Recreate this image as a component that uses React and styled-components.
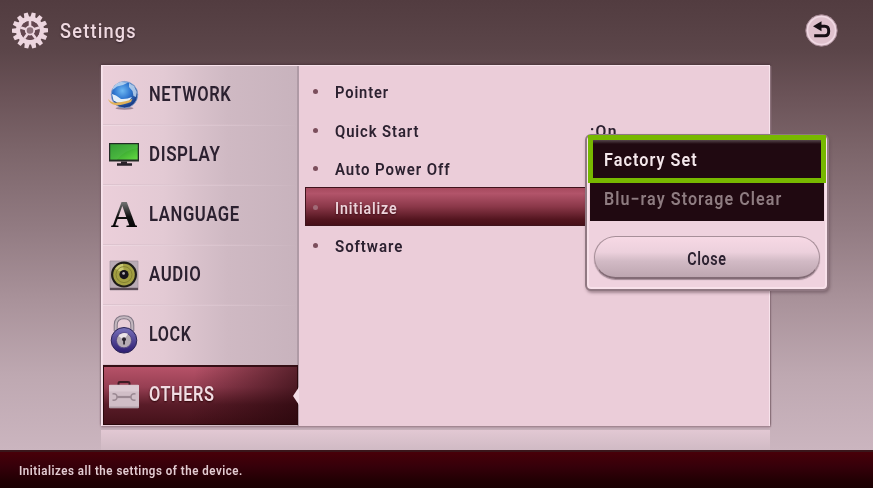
import React, { useState } from 'react';
import styled, { createGlobalStyle, css } from 'styled-components';

const theme = {
  font: 'Roboto, "Liberation Sans", sans-serif',
  ink: '#2c2130',
  panel: '#ebcdd9',
  light: '#f3dde6',
  highlight: '#77b800',
};

const GlobalStyle = createGlobalStyle`
  body {
    margin: 0;
    overflow: hidden;
  }
  * {
    box-sizing: border-box;
  }
`;

const Screen = styled.div`
  display: flex;
  flex-direction: column;
  width: 873px;
  height: 488px;
  font-family: ${theme.font};
  background: linear-gradient(#523c40 0, #5b4549 50px, #6b5358 95px, #7c656a 150px, #917a81 225px, #a9929a 300px, #bea8b1 375px, #cbb5bf 450px);
`;

// condensed lettering, squeezed from its left edge
const Label = styled.span`
  display: inline-block;
  white-space: nowrap;
  font-size: ${({ $size }) => $size}px;
  line-height: 1;
  font-weight: ${({ $weight }) => $weight || 600};
  letter-spacing: ${({ $gap }) => $gap || 0}px;
  transform: scaleX(${({ $squeeze }) => $squeeze || 0.8});
  transform-origin: ${({ $origin }) => $origin || 'left'} center;
`;

const Header = styled.header`
  display: flex;
  align-items: center;
  height: 65px;
  padding: 0 35px 5px 11px;
  color: #efd9e0;
  text-shadow: 0 1px 2px #33222a;
`;

const Title = styled.h1`
  flex: 1;
  display: flex;
  margin: 2px 0 0 11px;
`;

const BackButton = styled.button`
  display: flex;
  width: 33px;
  height: 33px;
  padding: 0;
  border: 0;
  background: none;
`;

const Panel = styled.main`
  display: flex;
  position: relative;
  flex: none;
  width: 669px;
  height: 361px;
  margin-left: 101px;
  background: ${theme.panel};
  border: solid #f8e3ec;
  border-width: 1px 1px 0 1px;
  box-shadow: 0 -1px 2px #4b353c, 1px 1px 1px #a98e99, 0 2px 2px #b299a4;
`;

const Sidebar = styled.nav`
  width: 197px;
  border-left: 1px solid #f4dfe8;
  border-right: 2px solid #af9aa5;
  background: linear-gradient(90deg, #ebcfda 0, #e3cad4 60px, #cfb9c3 125px, #c8b3bd 100%);
`;

const MenuItem = styled.div`
  display: flex;
  align-items: center;
  position: relative;
  height: 60px;
  padding: 0 0 3px 5px;
  color: ${theme.ink};
  background: linear-gradient(90deg, #dcc3ce, #cbb5bf00 85%) bottom 1px left / 100% 1px no-repeat,
    linear-gradient(90deg, #f0dae3, #d0bbc5 85%, transparent) bottom / 100% 1px no-repeat;

  ${({ $active }) => $active && css`
    width: 195px;
    margin-top: -1px;
    padding: 0 0 2px 4px;
    color: #f2dce3;
    text-shadow: 0 1px 2px #2c0508;
    border: 1px solid #2b080c;
    border-top: 2px solid #350f15;
    background: linear-gradient(100deg, transparent 45%, #25050ab0 100%),
      linear-gradient(#b65268, #973f53 35%, #591c28 66%, #45111a);

    &::after {
      content: '';
      position: absolute;
      top: 20px;
      right: -2px;
      border: solid transparent;
      border-width: 9px 6px 9px 0;
      border-right-color: ${theme.light};
    }
  `}
`;

const MenuIcon = styled.span`
  display: flex;
  justify-content: center;
  width: 32px;
  margin-right: 9px;
`;

const Letter = styled.span`
  font: bold 37px/34px "Liberation Serif", serif;
  background: linear-gradient(#777 10%, #111 55%, #000);
  background-clip: text;
  color: transparent;
`;

const Options = styled.section`
  flex: 1;
  padding: 5.5px 0 0 6px;
`;

const Option = styled.div`
  display: grid;
  grid-template-columns: 30px 255px 1fr;
  align-items: center;
  height: 38.5px;
  padding-top: 5.5px;
  color: ${theme.ink};

  ${({ $active }) => $active && css`
    color: #ecd3da;
    text-shadow: 0 1px 2px #3b0b14;
    border: 1px solid #3f131c;
    border-right: 0;
    grid-template-columns: 29px 255px 1fr;
    background: linear-gradient(#a64a5e, #b2546a 15%, #8b3849 50%, #53151f 85%, #470f18);
  `}
`;

const Bullet = styled.i`
  width: 5px;
  height: 5px;
  margin: -4px 0 0 ${({ $active }) => ($active ? 7 : 8)}px;
  border-radius: 50%;
  background: ${({ $active }) => ($active ? '#a06a77' : '#7b4e5c')};
`;

const Reflection = styled.div`
  width: 669px;
  height: 20px;
  margin: 4px 0 0 101px;
  background: linear-gradient(#e2c8d3, #d0bac4);
`;

const Footer = styled.footer`
  display: flex;
  align-items: center;
  height: 38px;
  margin-top: auto;
  padding: 1px 0 0 19px;
  color: #e3ccd2;
  border-top: 2px solid #3a161b;
  background: linear-gradient(#480009, #36000a 40%, #210003 80%, #1b0002);
`;

const Popup = styled.aside`
  position: absolute;
  top: 68px;
  left: 483px;
  width: 244px;
  height: 157px;
  padding: 5px 4px 0 5px;
  border: 2px solid #907882;
  border-radius: 6px;
  background: #efd2de;
  box-shadow: inset 0 0 0 2px #f8e1ea, 1px 2px 3px #5d465080;
`;

const Choice = styled.div`
  display: flex;
  align-items: center;
  height: 38px;
  padding: 0 0 5px 14px;
  margin: 0 -1px 0 -2px;
  color: #8e7c81;
  background: #200911;

  ${({ $selected }) => $selected && css`
    height: 48px;
    margin: -6px -3px 0 -4px;
    padding: 2px 0 0 11px;
    color: #f4e7eb;
    border: 5px solid ${theme.highlight};
    background: linear-gradient(#55454b, #200911 4px);
  `}
`;

const CloseButton = styled.button`
  display: flex;
  align-items: center;
  justify-content: center;
  width: 226px;
  height: 43px;
  margin: 15px 0 0 2px;
  padding: 6px 0 0;
  border: 1px solid #a78f99;
  border-bottom: 2px solid #826b75;
  border-radius: 22px;
  color: ${theme.ink};
  font-family: inherit;
  background: linear-gradient(#f7d9e5, #ecd0dc 38%, #d2bac5 60%, #bda6b0);
  box-shadow: 0 1px 1px #a28a95;
`;

const GearIcon = () => (
  <svg width="38" height="38" viewBox="-19 -19.5 38 38">
    <g fill="#edd6df">
      {[...Array(14)].map((_, i) => (
        <path key={i} d="M-2.6-12L-2-18H2L2.6-12Z" transform={`rotate(${i * 360 / 14 + 12})`} />
      ))}
    </g>
    <circle r="11.8" fill="none" stroke="#edd6df" strokeWidth="4.4" />
    <circle r="9.6" fill="#64474f" />
    {[0, 72, 144, 216, 288].map((a) => (
      <path key={a} d="M0-3V-10" stroke="#edd6df" strokeWidth="2.6" transform={`rotate(${a})`} />
    ))}
    <circle r="4.2" fill="#8b6f78" stroke="#edd6df" strokeWidth="1.8" />
  </svg>
);

const BackIcon = () => (
  <svg width="33" height="33" viewBox="0 0 33 33">
    <circle cx="16.5" cy="16.5" r="15.7" fill="#dcbfcb" stroke="#a58994" />
    <circle cx="16.5" cy="16.5" r="14" fill="#dfc1cd" stroke="#f0d9e3" strokeWidth="1.5" />
    <path d="M14 12.2H19.8Q23.7 12.2 23.7 17T19.8 21.8H9.2" fill="none" stroke="#170f15" strokeWidth="3" />
    <path d="M8 12.2L16.5 7.2V17.2Z" fill="#170f15" />
  </svg>
);

const GlobeIcon = () => (
  <svg width="32" height="32" viewBox="0 0 32 32">
    <defs>
      <radialGradient id="globe" cx=".42" cy=".35" r=".7">
        <stop offset="0" stopColor="#6db8f2" />
        <stop offset=".45" stopColor="#2f76cf" />
        <stop offset="1" stopColor="#152c72" />
      </radialGradient>
    </defs>
    <ellipse cx="16.5" cy="29.3" rx="9" ry="1.4" fill="#9b8394" />
    <circle cx="16.5" cy="15.7" r="13.3" fill="url(#globe)" stroke="#8aa6cf" strokeWidth=".8" />
    <path d="M5 9Q8 4 13 3L20 3.4 15 6 9 7.5 4.5 11ZM21 4L26 7 28.8 13 28 18 25.5 17 24.5 12 21 8Z" fill="#c9def2" opacity=".8" />
    <path d="M4 15L8 16.5 13 20Q19 20.5 24 18L20.5 22.5Q12 26 5.5 21.5Z" fill="#e5eff8" />
    <path d="M0 20Q3 24 9 23.6 18 23 24.5 19.8L23 23Q14 26.8 7 26 1.5 25 0 20Z" fill="#e0b158" />
  </svg>
);

const MonitorIcon = () => (
  <svg width="32" height="25" viewBox="0 0 32 25">
    <defs>
      <linearGradient id="screen" x1="0" y1="0" x2="1" y2="1">
        <stop offset="0" stopColor="#238a25" />
        <stop offset=".5" stopColor="#3dac32" />
        <stop offset="1" stopColor="#65dc42" />
      </linearGradient>
    </defs>
    <path d="M1 1H31V19.5H1Z" fill="#222a25" />
    <path d="M2.3 2.3H29.7V17.5H2.3Z" fill="url(#screen)" />
    <path d="M2.3 2.3H29.7V6Q17 8 9 17.5H2.3Z" fill="#5dc457" opacity=".35" />
    <path d="M13 19.5H19V21.3H24V23.8H9V21.3H13Z" fill="#292229" />
  </svg>
);

const SpeakerIcon = () => (
  <svg width="30" height="32" viewBox="0 0 30 32">
    <path d="M1 2H29V31H1Z" fill="#b9abb5" stroke="#a08f9b" strokeWidth=".7" />
    <path d="M1 28.8H29V31H1Z" fill="#5b4c57" />
    <circle cx="15" cy="15.6" r="13" fill="#1e1c18" />
    <circle cx="15" cy="15.6" r="10.8" fill="#a3a043" />
    <path d="M15 15L6 9.6A10.8 10.8 0 0 1 14 4.8Z" fill="#d9d987" opacity=".7" />
    <circle cx="15" cy="15.6" r="8" fill="none" stroke="#7c782c" strokeWidth=".8" />
    <circle cx="15" cy="15.6" r="4.6" fill="#15131a" />
    <circle cx="14.6" cy="14.4" r="1.4" fill="#b2aeb5" />
  </svg>
);

const LockIcon = () => (
  <svg width="30" height="41" viewBox="0 0 30 41">
    <defs>
      <linearGradient id="body" x2="0" y2="1">
        <stop offset="0" stopColor="#7871b9" />
        <stop offset="1" stopColor="#2d1c71" />
      </linearGradient>
    </defs>
    <path d="M6.7 17V11Q6.7 3.2 15 3.2T23.3 11V17" fill="none" stroke="#817684" strokeWidth="4" />
    <path d="M6.7 17V11Q6.7 3.2 15 3.2T23.3 11V17" fill="none" stroke="#c3b7bf" strokeWidth="2" />
    <circle cx="15" cy="26.3" r="12.8" fill="url(#body)" stroke="#2b2355" />
    <circle cx="15" cy="26.3" r="7.6" fill="#b6acb4" stroke="#584a86" />
    <path d="M9.4 22A7.6 7.6 0 0 1 19 19.8L15 26Z" fill="#ece4e8" />
    <circle cx="15" cy="25.2" r="2" fill="#29222d" />
    <path d="M14.2 26H15.9V30.5H14.2Z" fill="#29222d" />
  </svg>
);

const ToolboxIcon = () => (
  <svg width="32" height="28" viewBox="0 0 32 28">
    <path d="M10.5 4.5V2.1Q10.5 1 12 1H20Q21.5 1 21.5 2.1V4.5" fill="none" stroke="#3e1b24" strokeWidth="2" />
    <rect x="1" y="3.7" width="30" height="23.5" rx="1" fill="#d0bec7" />
    <path d="M1 4.2H31V10.5H1Z" fill="#dccbd3" />
    <path d="M1 26.2H31" stroke="#a18e97" />
    <path d="M9 16H23" stroke="#9b8993" strokeWidth="2.2" />
    <path d="M4.5 13Q9 12.2 9 16T4.5 19M27.5 13Q23 12.2 23 16T27.5 19" fill="none" stroke="#9b8993" strokeWidth="1.5" />
  </svg>
);

const menu = [
  { name: 'NETWORK', icon: <GlobeIcon />, squeeze: 0.845 },
  { name: 'DISPLAY', icon: <MonitorIcon />, squeeze: 0.87 },
  { name: 'LANGUAGE', icon: <Letter>A</Letter>, squeeze: 0.855 },
  { name: 'AUDIO', icon: <SpeakerIcon />, squeeze: 0.86 },
  { name: 'LOCK', icon: <LockIcon />, squeeze: 0.83 },
  { name: 'OTHERS', icon: <ToolboxIcon />, squeeze: 0.84 },
];

const options = [
  { name: 'Pointer', squeeze: 0.89 },
  { name: 'Quick Start', squeeze: 0.9, value: ':On' },
  { name: 'Auto Power Off', squeeze: 0.91 },
  { name: 'Initialize', squeeze: 0.86 },
  { name: 'Software', squeeze: 0.915 },
];

const choices = [
  { name: 'Factory Set', squeeze: 0.875 },
  { name: 'Blu−ray Storage Clear', squeeze: 0.87 },
];

function App() {
  const [page, setPage] = useState('OTHERS');
  const [choice, setChoice] = useState('Factory Set');

  return (
    <Screen>
      <GlobalStyle />
      <Header>
        <GearIcon />
        <Title><Label $size={21} $weight={500} $gap={1.4} $squeeze={0.865}>Settings</Label></Title>
        <BackButton aria-label="Back"><BackIcon /></BackButton>
      </Header>
      <Panel>
        <Sidebar>
          {menu.map(({ name, icon, squeeze }) => (
            <MenuItem key={name} $active={name === page} onClick={() => setPage(name)}>
              <MenuIcon>{icon}</MenuIcon>
              <Label $size={19.5} $gap={0.7} $weight={560} $squeeze={squeeze}>{name}</Label>
            </MenuItem>
          ))}
        </Sidebar>
        <Options>
          {options.map(({ name, squeeze, value }) => (
            <Option key={name} $active={name === 'Initialize'}>
              <Bullet $active={name === 'Initialize'} />
              <Label $size={16.5} $gap={1} $squeeze={squeeze}>{name}</Label>
              {value && <Label $size={16.5} $gap={1.4} $squeeze={0.95}>{value}</Label>}
            </Option>
          ))}
        </Options>
        <Popup>
          {choices.map(({ name, squeeze }) => (
            <Choice key={name} $selected={name === choice} onClick={() => setChoice(name)}>
              <Label $size={18.5} $gap={1.2} $squeeze={squeeze}>{name}</Label>
            </Choice>
          ))}
          <CloseButton>
            <Label $size={17.5} $gap={0.7} $squeeze={0.82} $origin="center">Close</Label>
          </CloseButton>
        </Popup>
      </Panel>
      <Reflection />
      <Footer>
        <Label $size={13} $gap={0.6} $squeeze={0.885}>Initializes all the settings of the device.</Label>
      </Footer>
    </Screen>
  );
}

export default App;
